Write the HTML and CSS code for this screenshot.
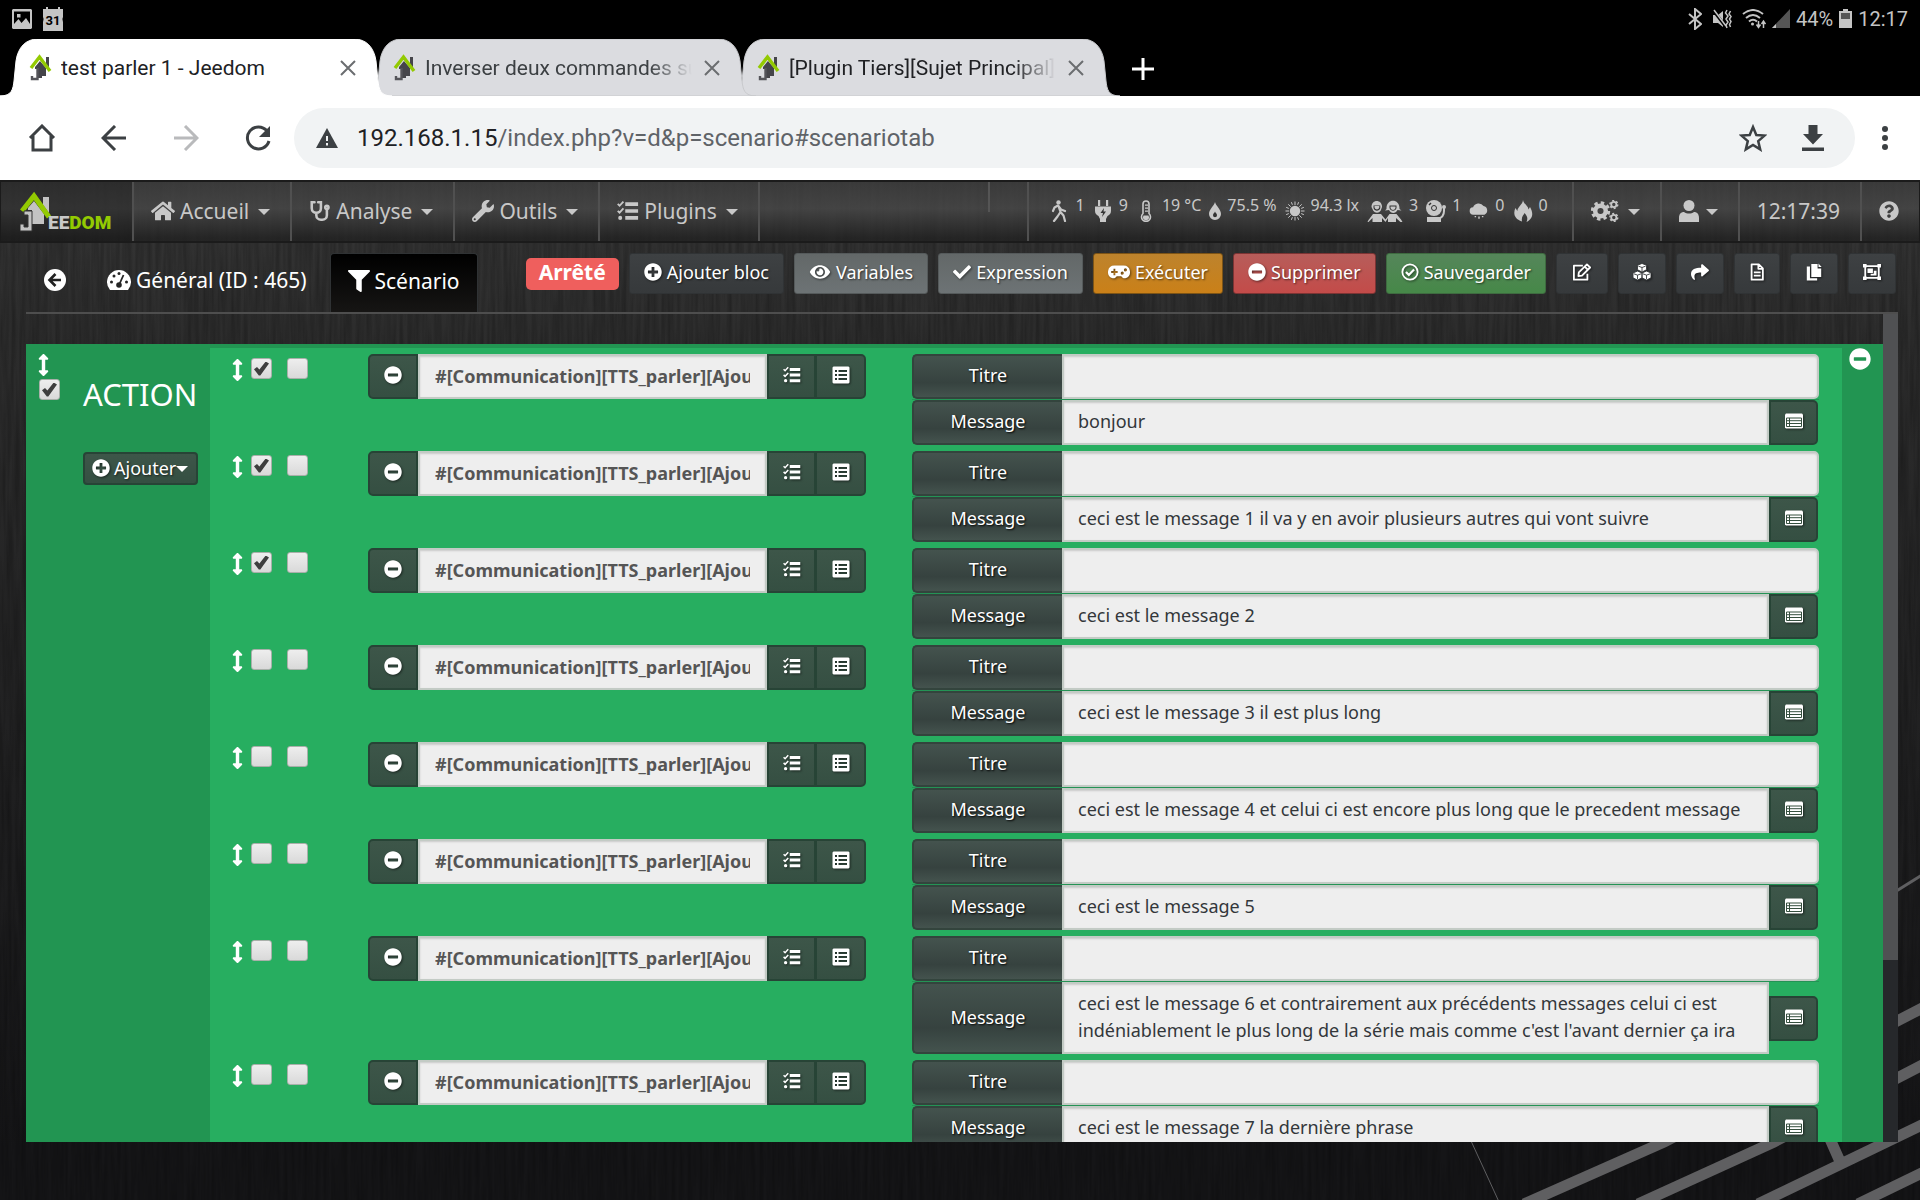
FILE: index.html
```html
<!DOCTYPE html>
<html lang="fr">
<head>
<meta charset="utf-8">
<title>test parler 1 - Jeedom</title>
<link rel="stylesheet" href="styles.css">
</head>
<body>
<svg class="defs" aria-hidden="true">
  <symbol id="home" viewBox="0 0 576 512"><path d="M280.37 148.26L96 300.11V464a16 16 0 0 0 16 16l112.06-.29a16 16 0 0 0 15.92-16V368a16 16 0 0 1 16-16h64a16 16 0 0 1 16 16v95.64a16 16 0 0 0 16 16.05L464 480a16 16 0 0 0 16-16V300L295.67 148.26a12.19 12.19 0 0 0-15.3 0zM571.6 251.47L488 182.56V44.05a12 12 0 0 0-12-12h-56a12 12 0 0 0-12 12v72.61L318.47 43a48 48 0 0 0-61 0L4.34 251.47a12 12 0 0 0-1.6 16.9l25.5 31A12 12 0 0 0 45.15 301l235.22-193.74a12.19 12.19 0 0 1 15.3 0L530.9 301a12 12 0 0 0 16.9-1.6l25.5-31a12 12 0 0 0-1.7-16.93z"/></symbol>
  <symbol id="stethoscope" viewBox="0 0 24 24"><g fill="none" stroke="currentColor" stroke-width="2.800" stroke-linecap="round"><path d="M6 2.500H3V9a5 5 0 0 0 10 0V2.500h-3M8 14v2.500a5 5 0 0 0 5 5h1.500a5 5 0 0 0 5-5V11"/><circle cx="19.500" cy="8" r="1.800"/></g></symbol>
  <symbol id="wrench" viewBox="0 0 512 512"><path d="M507.73 109.1c-2.24-9.03-13.54-12.09-20.12-5.51l-74.36 74.36-67.88-11.31-11.31-67.88 74.36-74.36c6.62-6.62 3.43-17.9-5.66-20.16-47.38-11.74-99.55.91-136.58 37.93-39.64 39.64-50.55 97.1-34.05 147.2L18.74 402.76c-24.99 24.99-24.99 65.51 0 90.5 24.99 24.99 65.51 24.99 90.5 0l213.21-213.21c50.12 16.71 107.47 5.68 147.37-34.22 37.07-37.07 49.7-89.32 37.91-136.73zM64 472c-13.25 0-24-10.75-24-24 0-13.26 10.75-24 24-24s24 10.74 24 24c0 13.25-10.75 24-24 24z"/></symbol>
  <symbol id="tasks" viewBox="0 0 24 24"><path d="M9 2.500h14v4H9zM9 10h14v4H9zM9 17.500h14v4H9z"/><circle cx="3.500" cy="19.500" r="2.200"/><path d="M.8 4.300l2 2L7 1.700M.8 11.800l2 2L7 9.200" fill="none" stroke="currentColor" stroke-width="2"/></symbol>
  <symbol id="walk" viewBox="0 0 18 22"><circle cx="7.500" cy="2.400" r="2.200"/><path d="M2 11L3.500 7.500l3.500-2 3 4 4 1.500M7.500 6l2 6-3 4.500L3 21M9.500 12l3 3.500L14 21" fill="none" stroke="currentColor" stroke-width="2.200" stroke-linecap="round" stroke-linejoin="round"/></symbol>
  <symbol id="plug" viewBox="0 0 18 22"><path d="M4 0h2.200v6H4zM12 0h2.200v6H12zM1 6.500h16V11c0 3-2 4-3.500 5L12 19v3H6v-3l-1.500-3C3 15 1 14 1 11z"/><path d="M10 8l-3.500 5H9l-1 4 4-5.500H9.500z" fill="#333"/></symbol>
  <symbol id="thermo" viewBox="0 0 18 22"><path d="M6 13.500V4a3 3 0 0 1 6 0v9.500a4.500 4.500 0 1 1-6 0z" fill="none" stroke="currentColor" stroke-width="1.600"/><path d="M6.500 15.500h5a3 3 0 1 1-5 0zM8 4.500h3v1.200H8zM8 7.500h3v1.200H8zM8 10.500h3v1.200H8z"/></symbol>
  <symbol id="drop" viewBox="0 0 12 18"><path d="M6 0c1 4 6 7.500 6 12a6 6 0 0 1-12 0C0 7.500 5 4 6 0z"/><path d="M6 9.500c.4 1.500 2 2 2 3.700a2 2 0 0 1-4 0C4 11.500 5.600 11 6 9.500z" fill="#333"/></symbol>
  <symbol id="sun" viewBox="0 0 20 20"><circle cx="10" cy="10" r="5.200"/><path d="M10 .5V4M10 16v3.500M.5 10H4M16 10h3.500M3.300 3.300l2.400 2.400M14.300 14.300l2.400 2.400M3.300 16.700l2.400-2.400M14.300 5.700l2.400-2.400M6.400 1.200l1 2.600M12.600 16.200l1 2.600M1.200 13.600l2.600-1M16.200 7.400l2.600-1M1.200 6.400l2.600 1M16.200 12.600l2.600 1M6.400 18.800l1-2.600M12.600 3.800l1-2.600" stroke="currentColor" stroke-width="1"/></symbol>
  <symbol id="people" viewBox="0 0 36 22"><path d="M4.500 7C4.500-1 15-1 15 7l-1.300 3.500c-2 3-5.400 3-7.500 0z"/><path d="M6.500 5.500h6.800V8c-1 3.500-5.800 3.500-6.800 0z" fill="#333"/><path d="M7.500 6h4.800v1.500c-.8 2.500-4 2.500-4.800 0z"/><path d="M.5 22l1-2 4.500-6h8l4.500 5.500 4-5.500h7l4.500 5.500 1.500 2.500-1.500.5-5-4.500v4H21v-4l-2.500 4-3.500-4v4H5.500v-4l-4 4z"/><path d="M19.500 9C19-2 33-2 32.500 9l2 1.500-4-.5c-2 4-6.500 4-8.500 0l-4 .5z"/><path d="M22.500 5.500h7V8c-1 3.500-6 3.500-7 0z" fill="#333"/><path d="M23.500 6.500h5V8c-.8 2.500-4.200 2.500-5 0z"/></symbol>
  <symbol id="bell" viewBox="0 0 20 22"><circle cx="8" cy="8" r="8"/><circle cx="8" cy="8" r="2.500" fill="none" stroke="#333"/><path d="M3 5l2-2" stroke="#333" stroke-width="1.500"/><path d="M1 17h14v5H1z"/><path d="M18 8v3c0 5-3 7-6 8" fill="none" stroke="currentColor" stroke-width="2"/><circle cx="18" cy="7" r="2"/></symbol>
  <symbol id="rain" viewBox="0 0 22 18"><path d="M5 13a4 4 0 0 1-.5-8A6.500 6.500 0 0 1 16 3.500 5 5 0 0 1 17 13z"/><path d="M7 14.500v1.500M11 15v2.500M15 14.500v1.500" stroke="currentColor" stroke-width="1.600"/></symbol>
  <symbol id="fire" viewBox="0 0 20 22"><path d="M10 0c.5 4 5 5.500 5.500 9.500L17 7c3 5 4 11-3.500 15 1.500-3 1-6-2-9-.5 2-3.500 3.500-2.500 8.500C1 19 0 13 2.500 8l1.800 3C5 6 9.500 5 10 0z"/></symbol>
  <symbol id="cogs" viewBox="0 0 28 22"><circle cx="9.500" cy="11" r="5.300" fill="none" stroke="currentColor" stroke-width="4.500"/><circle cx="9.500" cy="11" r="8" fill="none" stroke="currentColor" stroke-width="3.400" stroke-dasharray="3.300 2.980"/><g fill="none" stroke="currentColor"><circle cx="22.800" cy="4.500" r="2.600" stroke-width="1.800"/><circle cx="22.800" cy="4.500" r="3.900" stroke-width="1.500" stroke-dasharray="2 2.080"/><circle cx="22.800" cy="17.500" r="2.600" stroke-width="1.800"/><circle cx="22.800" cy="17.500" r="3.900" stroke-width="1.500" stroke-dasharray="2 2.080"/></g></symbol>
  <symbol id="user" viewBox="0 0 20 22"><circle cx="10" cy="5.500" r="5.500"/><path d="M0 22v-4c0-4 2-6 5-6 3 2 7 2 10 0 3 0 5 2 5 6v4z"/></symbol>
  <symbol id="question" viewBox="0 0 512 512"><path d="M504 256c0 136.997-111.043 248-248 248S8 392.997 8 256C8 119.083 119.043 8 256 8s248 111.083 248 248zM262.655 90c-54.497 0-89.255 22.957-116.549 63.758-3.536 5.286-2.353 12.415 2.715 16.258l34.699 26.31c5.205 3.947 12.621 3.008 16.665-2.122 17.864-22.658 30.113-35.797 57.303-35.797 20.429 0 45.698 13.148 45.698 32.958 0 14.976-12.363 22.667-32.534 33.976C247.128 238.528 216 254.941 216 296v4c0 6.627 5.373 12 12 12h56c6.627 0 12-5.373 12-12v-1.333c0-28.462 83.186-29.647 83.186-106.667 0-58.002-60.165-102-116.531-102zM256 338c-25.365 0-46 20.635-46 46 0 25.364 20.635 46 46 46s46-20.636 46-46c0-25.365-20.635-46-46-46z"/></symbol>
  <symbol id="back" viewBox="0 0 22 22"><circle cx="11" cy="11" r="11"/><path d="M11.500 5L5.500 11l6 6M6 11h11" fill="none" stroke="#222" stroke-width="2.600"/></symbol>
  <symbol id="gauge" viewBox="0 0 24 22"><path d="M3 21A12 12 0 1 1 21 21z"/><g fill="#242424"><circle cx="4.500" cy="13" r="1.500"/><circle cx="7" cy="7" r="1.500"/><circle cx="12" cy="4.500" r="1.500"/><circle cx="19.500" cy="13" r="1.500"/><circle cx="12" cy="16" r="2.800"/></g><path d="M12 16l4.500-10" stroke="#242424" stroke-width="1.800"/></symbol>
  <symbol id="filter" viewBox="0 0 512 512"><path d="M487.976 0H24.028C2.71 0-8.047 25.866 7.058 40.971L192 225.941V432c0 7.831 3.821 15.17 10.237 19.662l80 55.98C298.02 518.69 320 507.493 320 487.98V225.941l184.947-184.97C520.021 25.896 509.338 0 487.976 0z"/></symbol>
  <symbol id="plus" viewBox="0 0 512 512"><path d="M256 8C119 8 8 119 8 256s111 248 248 248 248-111 248-248S393 8 256 8zm144 276c0 6.6-5.4 12-12 12h-92v92c0 6.6-5.4 12-12 12h-56c-6.600 0-12-5.400-12-12v-92h-92c-6.600 0-12-5.400-12-12v-56c0-6.600 5.400-12 12-12h92v-92c0-6.600 5.400-12 12-12h56c6.600 0 12 5.400 12 12v92h92c6.600 0 12 5.400 12 12v56z"/></symbol>
  <symbol id="minus" viewBox="0 0 512 512"><path d="M256 8C119 8 8 119 8 256s111 248 248 248 248-111 248-248S393 8 256 8zM124 296c-6.600 0-12-5.400-12-12v-56c0-6.600 5.400-12 12-12h264c6.600 0 12 5.400 12 12v56c0 6.600-5.400 12-12 12H124z"/></symbol>
  <symbol id="eye" viewBox="0 0 576 512"><path d="M572.52 241.4C518.29 135.59 410.93 64 288 64S57.68 135.64 3.480 241.41a32.35 32.35 0 0 0 0 29.19C57.71 376.41 165.07 448 288 448s230.32-71.64 284.52-177.41a32.35 32.35 0 0 0 0-29.19zM288 400a144 144 0 1 1 144-144 143.93 143.93 0 0 1-144 144zm0-240a95.31 95.31 0 0 0-25.31 3.790 47.85 47.85 0 0 1-66.9 66.9A95.78 95.78 0 1 0 288 160z"/></symbol>
  <symbol id="check" viewBox="0 0 512 512"><path d="M173.898 439.404l-166.4-166.4c-9.997-9.997-9.997-26.206 0-36.204l36.203-36.204c9.997-9.998 26.207-9.998 36.204 0L192 312.69 432.095 72.596c9.997-9.997 26.207-9.997 36.204 0l36.203 36.204c9.997 9.997 9.997 26.206 0 36.204l-294.4 294.401c-9.998 9.997-26.207 9.997-36.204-.001z"/></symbol>
  <symbol id="pad" viewBox="0 0 24 16"><path fill-rule="evenodd" d="M7 1h10a7 7 0 0 1 2 13.700c-2 .5-3.500-.7-4.500-2.200h-5C8.500 14 7 15.200 5 14.700A7 7 0 0 1 7 1zM6 4.500V7H3.500v2H6v2.500h2V9h2.500V7H8V4.500zM15.500 7.500a1.700 1.700 0 1 0 .1 3.400 1.700 1.700 0 0 0-.1-3.400zM19 4a1.700 1.700 0 1 0 .1 3.400A1.700 1.700 0 0 0 19 4z"/></symbol>
  <symbol id="okcircle" viewBox="0 0 20 20"><g fill="none" stroke="currentColor" stroke-width="2"><circle cx="10" cy="10" r="8.500"/><path d="M5.500 10l3.200 3.200 5.800-6" stroke-width="2.400"/></g></symbol>
  <symbol id="edit" viewBox="0 0 22 20"><g fill="none" stroke="currentColor" stroke-width="2" stroke-linejoin="round"><path d="M12 3H2v15.500h15V12"/><path d="M7.500 10.500L16.500 1.500 20 5l-9 9-4 .5z M14 4l3.500 3.500"/></g></symbol>
  <symbol id="cubes" viewBox="0 0 20 20"><g stroke="#36393a"><path d="M10 .5l5 2v5l-5 2.500-5-2.500v-5zM5 9l5 2v5.500L5 19l-5-2.500V11zM15 9l5 2v5.500L15 19l-5-2.500V11z"/><path d="M6 3.500l4 1.500 4-1.500M10 5v4M1 12l4 1.500L9 12M5 13.500V18M11 12l4 1.500 4-1.500M15 13.500V18" fill="none"/></g></symbol>
  <symbol id="share" viewBox="0 0 512 512"><path d="M503.691 189.836L327.687 37.851C312.281 24.546 288 35.347 288 56.015v80.053C127.371 137.907 0 170.1 0 322.326c0 61.441 39.581 122.309 83.333 154.132 13.653 9.931 33.111-2.533 28.077-18.631C66.066 312.814 132.917 274.316 288 272.085V360c0 20.700 24.300 31.453 39.687 18.164l176.004-152c11.071-9.562 11.086-26.753 0-36.328z"/></symbol>
  <symbol id="file" viewBox="0 0 16 20"><path d="M2 1.500h8L14.500 6v12.500H2zM9.500 1.500v5h5M4.500 10.500h7.500M4.500 14h7.500" fill="none" stroke="currentColor" stroke-width="2" stroke-linejoin="round"/></symbol>
  <symbol id="copy" viewBox="0 0 18 20"><path d="M6 1h7v5h4v9.500H6zM14 .5L17.500 4.500H14zM4.500 4v13h8v2.500H1V4z"/></symbol>
  <symbol id="group" viewBox="0 0 20 18"><path d="M2.500 2.500h15v13h-15z" fill="none" stroke="currentColor" stroke-width="2"/><path d="M0 0h4v4H0zM16 0h4v4h-4zM0 14h4v4H0zM16 14h4v4h-4zM5 5h6v5H5zM12 7.500h3V13H8.500v-2H12z"/></symbol>
  <symbol id="updown" viewBox="0 0 256 512"><path d="M214.059 377.941H168V134.059h46.059c21.382 0 32.09-25.851 16.971-40.971L144.971 7.029c-9.373-9.373-24.568-9.373-33.941 0L24.971 93.088c-15.119 15.119-4.411 40.971 16.971 40.971H88v243.882H41.941c-21.382 0-32.09 25.851-16.971 40.971l86.059 86.059c9.373 9.373 24.568 9.373 33.941 0l86.059-86.059c15.12-15.119 4.412-40.971-16.970-40.971z"/></symbol>
  <symbol id="list" viewBox="0 0 18 18"><path fill-rule="evenodd" d="M1.500.5h15l1 1v15l-1 1h-15l-1-1v-15zM3 4v2h2V4zM6.500 4v2H15V4zM3 8v2h2V8zM6.500 8v2H15V8zM3 12v2h2v-2zM6.500 12v2H15v-2z"/></symbol>
  <symbol id="card" viewBox="0 0 18 15"><path d="M1 0h16l1 1v13l-1 1H1l-1-1V1z"/><path d="M1.500 4.500h15v8.500h-15zM1.500 7.200h15M1.500 10h15M4.500 4.500v8.500" fill="none" stroke="#36503f"/></symbol>
  <symbol id="favicon" viewBox="0 0 24 28"><path d="M6 13l5-6 6 7v8h-4v2H9v-9H6zM17 3h3v11l-3-4z" fill="#45454a"/><path d="M2 14L10.500 3 21 17" fill="none" stroke="#93ca02" stroke-width="3.400"/><path d="M8.500 14v11H3v-3" fill="none" stroke="#55555a" stroke-width="2.400"/></symbol>
  <symbol id="close" viewBox="0 0 16 16"><path d="M1 1l14 14M15 1L1 15" stroke="currentColor" stroke-width="2"/></symbol>
  <symbol id="tabshape" viewBox="0 0 392 57" preserveAspectRatio="none"><path d="M0 57C12 57 13 50 14 42L16 22C18 8 26 0 38 0H354C366 0 374 8 376 22L378 42C379 50 380 57 392 57Z"/></symbol>
</svg>

<div class="statusbar">
  <svg width="20" height="20" viewBox="0 0 20 20"><path fill-rule="evenodd" d="M1 0h18l1 1v18l-1 1H1l-1-1V1zM2 2.500V15l4.500-5 3 4L14 9l4 6V2.500zM5 5h3.500v3.500H5z"/></svg>
  <svg class="calendar" width="22" height="24" viewBox="0 0 22 24"><path d="M1 2h3V0h2v2h10V0h2v2h3v8l-.6 2 .6 3v9H1v-9l.6-3L1 10z"/><text x="11" y="18" text-anchor="middle" class="cal">31</text></svg>
  <span class="spacer"></span>
  <svg width="14" height="22" viewBox="0 0 14 22"><path d="M1 6l12 10-6 5V1l6 5L1 16" fill="none" stroke="currentColor" stroke-width="2"/></svg>
  <svg class="mute" width="20" height="20" viewBox="0 0 20 20"><path d="M1 6h5l5-4v16l-5-4H1z"/><path d="M1 1l13 17" stroke="#000" stroke-width="3"/><path d="M2 1l12 16M15 1l-1.500 3L16 7l-2 3 2 3-2 3 1 3M18.500 2L17 5l2 2.500-1.500 2.500 1.500 2.500-1.500 3 1 2.500" fill="none" stroke="currentColor" stroke-width="1.500"/></svg>
  <svg width="24" height="20" viewBox="0 0 24 20"><g fill="none" stroke="currentColor" stroke-width="2"><path d="M1 5Q11-3 21 5M4 9q7-6 14 0M7 12.500q4-3.500 8 0"/><path d="M16.500 12v6M21.500 19v-6M14.500 15.500l2 3 2-3M19.500 15l2-3 2 3" stroke-width="1.500"/></g><circle cx="10.500" cy="15" r="1.500"/></svg>
  <svg width="18" height="20" viewBox="0 0 18 20"><path d="M18 0v19H0z" fill="#555"/><path d="M4 15v4H0z"/></svg>
  <span>44%</span>
  <svg width="13" height="19" viewBox="0 0 13 19"><path d="M4 0h5v2h4v17H0V2h4z"/><path d="M2 4h9v6H2z" fill="#555"/></svg>
  <span>12:17</span>
</div>

<div class="tabs">
  <div class="tab tab-active"><svg class="tab-bg"><use href="#tabshape"/></svg><svg class="fav"><use href="#favicon"/></svg><span class="tab-title">test parler 1 - Jeedom</span><button class="close" aria-label="Fermer"><svg><use href="#close"/></svg></button></div>
  <div class="tab tab-second"><svg class="tab-bg"><use href="#tabshape"/></svg><svg class="fav"><use href="#favicon"/></svg><span class="tab-title fade">Inverser deux commandes sur</span><button class="close" aria-label="Fermer"><svg><use href="#close"/></svg></button></div>
  <div class="tab"><svg class="tab-bg"><use href="#tabshape"/></svg><svg class="fav"><use href="#favicon"/></svg><span class="tab-title fade">[Plugin Tiers][Sujet Principal]</span><button class="close" aria-label="Fermer"><svg><use href="#close"/></svg></button></div>
  <button class="newtab" aria-label="Nouvel onglet"><svg width="22" height="22" viewBox="0 0 22 22"><path d="M11 0v22M0 11h22" stroke="#fff" stroke-width="3"/></svg></button>
</div>

<div class="toolbar">
  <button class="tool" aria-label="Accueil"><svg width="28" height="28" viewBox="0 0 28 28"><path d="M2 14L14 2l12 12M5 12v14h18V12" fill="none" stroke="currentColor" stroke-width="3"/></svg></button>
  <button class="tool" aria-label="Retour"><svg width="26" height="26" viewBox="0 0 26 26"><path d="M14 1L2 13l12 12M2 13h23" fill="none" stroke="currentColor" stroke-width="3"/></svg></button>
  <button class="tool tool-off" aria-label="Suivant"><svg width="26" height="26" viewBox="0 0 26 26"><path d="M12 1l12 12-12 12M24 13H1" fill="none" stroke="currentColor" stroke-width="3"/></svg></button>
  <button class="tool" aria-label="Actualiser"><svg width="26" height="26" viewBox="0 0 26 26"><path d="M22 6A11 11 0 1 0 24 16" fill="none" stroke="currentColor" stroke-width="3"/><path d="M25 1v11H14z"/></svg></button>
  <div class="omnibox">
    <svg width="22" height="20" viewBox="0 0 22 20"><path d="M11 0l11 20H0z"/><path d="M11 8v5M11 15v2.500" stroke="#f1f3f4" stroke-width="2"/></svg>
    <span class="url"><b>192.168.1.15</b>/index.php?v=d&amp;p=scenario#scenariotab</span>
    <button class="star" aria-label="Favori"><svg width="28" height="28" viewBox="0 0 28 28"><path d="M14 3l3.300 8 8.200.6-6.300 5.500 2 8.300-7.200-4.500-7.200 4.500 2-8.300L2.500 11.600l8.200-.6z" fill="none" stroke="currentColor" stroke-width="2.500"/></svg></button>
    <button class="star" aria-label="Télécharger"><svg width="22" height="26" viewBox="0 0 22 26"><path d="M6.500 0h9v9H21L11 19.500 1 9h5.500zM0 22.500h22V26H0z"/></svg></button>
  </div>
  <button class="tool" aria-label="Menu"><svg width="6" height="24" viewBox="0 0 6 24"><circle cx="3" cy="3" r="3"/><circle cx="3" cy="12" r="3"/><circle cx="3" cy="21" r="3"/></svg></button>
</div>

<div class="app">
  <svg class="wood" aria-hidden="true">
    <filter id="grain" x="0" y="0" width="100%" height="100%"><feTurbulence type="fractalNoise" baseFrequency="0.250 0.012" numOctaves="3" seed="4"/><feColorMatrix values="0 0 0 0 0  0 0 0 0 0  0 0 0 0 0  1.200 0 0 0 -0.350"/></filter>
    <rect width="100%" height="100%" filter="url(#grain)" opacity="0.350"/>
    <svg viewBox="0 0 1920 1020" preserveAspectRatio="xMaxYMax slice" width="100%" height="100%"><g stroke="#5f5f61" stroke-width="11" fill="none"><path d="M1524 1024L1664 962 1930 824M1638 1024L1774 962 1930 881M1758 1024L1930 941M1858 1024L1930 989M1826 950L1842 986"/><path d="M1890 715L1930 690" stroke-width="3"/><path d="M1466 950L1500 1024" stroke-width="1"/></g></svg>
  </svg>

  <nav class="navbar">
    <a class="brand" href="#"><svg class="brand-mark" viewBox="0 0 34 42"><path d="M8 17l6-7 10 13v10H12V19H8zM23 6h6v16l-6-8z" fill="#c3c3c3"/><path d="M2 20L14 5l15 21" fill="none" stroke="#93ca02" stroke-width="5"/><path d="M4 20h8v20H0v-7h4v3h4V24H4z" fill="#c3c3c3" stroke="#333"/></svg><span class="brand-name">EE<b>DOM</b></span></a>
    <a class="item" href="#"><svg class="i24"><use href="#home"/></svg>Accueil<i class="caret"></i></a>
    <a class="item" href="#"><svg class="i22"><use href="#stethoscope"/></svg>Analyse<i class="caret"></i></a>
    <a class="item" href="#"><svg class="i22"><use href="#wrench"/></svg>Outils<i class="caret"></i></a>
    <a class="item" href="#"><svg class="i22"><use href="#tasks"/></svg>Plugins<i class="caret"></i></a>
    <div class="item gap-item"><span class="tick"></span></div>
    <div class="item summary">
      <span><svg class="s18"><use href="#walk"/></svg>1</span>
      <span><svg class="s18"><use href="#plug"/></svg>9</span>
      <span><svg class="s18"><use href="#thermo"/></svg>19 °C</span>
      <span><svg class="s12"><use href="#drop"/></svg>75.5 %</span>
      <span><svg class="s18"><use href="#sun"/></svg>94.3 lx</span>
      <span><svg class="s36"><use href="#people"/></svg>3</span>
      <span><svg class="s18"><use href="#bell"/></svg>1</span>
      <span><svg class="s18"><use href="#rain"/></svg>0</span>
      <span><svg class="s18"><use href="#fire"/></svg>0</span>
    </div>
    <a class="item" href="#" aria-label="Réglages"><svg class="i28"><use href="#cogs"/></svg><i class="caret"></i></a>
    <a class="item" href="#" aria-label="Profil"><svg class="i20"><use href="#user"/></svg><i class="caret tight"></i></a>
    <span class="item">12:17:39</span>
    <a class="item help" href="#" aria-label="Aide"><svg class="i20"><use href="#question"/></svg></a>
  </nav>

  <div class="head">
    <a class="page-tab" href="#" aria-label="Retour"><svg class="i22"><use href="#back"/></svg></a>
    <a class="page-tab" href="#"><svg class="i24"><use href="#gauge"/></svg>Général (ID : 465)</a>
    <a class="page-tab current" href="#"><svg class="i22"><use href="#filter"/></svg>Scénario</a>
    <div class="actions">
      <span class="state">Arrêté</span>
      <button class="btn"><svg><use href="#plus"/></svg>Ajouter bloc</button>
      <button class="btn grey"><svg class="wide"><use href="#eye"/></svg>Variables</button>
      <button class="btn grey"><svg><use href="#check"/></svg>Expression</button>
      <button class="btn orange"><svg class="wide"><use href="#pad"/></svg>Exécuter</button>
      <button class="btn red"><svg><use href="#minus"/></svg>Supprimer</button>
      <button class="btn green"><svg><use href="#okcircle"/></svg>Sauvegarder</button>
      <button class="btn" aria-label="Modifier"><svg class="wide"><use href="#edit"/></svg></button>
      <button class="btn" aria-label="Objets"><svg><use href="#cubes"/></svg></button>
      <button class="btn" aria-label="Liens"><svg><use href="#share"/></svg></button>
      <button class="btn" aria-label="Journal"><svg class="slim"><use href="#file"/></svg></button>
      <button class="btn" aria-label="Dupliquer"><svg><use href="#copy"/></svg></button>
      <button class="btn" aria-label="Grouper"><svg><use href="#group"/></svg></button>
    </div>
  </div>

  <div class="scroller">
    <div class="view">
      <section class="block">
        <div class="side">
          <div class="side-handle"><svg class="grip"><use href="#updown"/></svg><input type="checkbox" checked aria-label="Activer le bloc"></div>
          <div class="side-main"><h2>ACTION</h2><button class="btn add"><svg><use href="#plus"/></svg>Ajouter<i class="caret"></i></button></div>
        </div>
        <div class="rows">
          <div class="row">
            <div class="opts"><svg class="grip"><use href="#updown"/></svg><input type="checkbox" checked aria-label="Activer"><input type="checkbox" aria-label="Parallèle"></div>
            <div class="cmd"><button class="btn" aria-label="Retirer"><svg><use href="#minus"/></svg></button><input type="text" aria-label="Commande" value="#[Communication][TTS_parler][Ajouter]#"><button class="btn" aria-label="Action"><svg><use href="#tasks"/></svg></button><button class="btn" aria-label="Choisir"><svg><use href="#list"/></svg></button></div>
            <div class="fields">
              <div class="field"><label for="t1">Titre</label><input type="text" id="t1"></div>
              <div class="field"><label for="m1">Message</label><textarea id="m1" rows="1">bonjour</textarea><button class="btn" aria-label="Choisir"><svg><use href="#card"/></svg></button></div>
            </div>
          </div>
          <div class="row">
            <div class="opts"><svg class="grip"><use href="#updown"/></svg><input type="checkbox" checked aria-label="Activer"><input type="checkbox" aria-label="Parallèle"></div>
            <div class="cmd"><button class="btn" aria-label="Retirer"><svg><use href="#minus"/></svg></button><input type="text" aria-label="Commande" value="#[Communication][TTS_parler][Ajouter]#"><button class="btn" aria-label="Action"><svg><use href="#tasks"/></svg></button><button class="btn" aria-label="Choisir"><svg><use href="#list"/></svg></button></div>
            <div class="fields">
              <div class="field"><label for="t2">Titre</label><input type="text" id="t2"></div>
              <div class="field"><label for="m2">Message</label><textarea id="m2" rows="1">ceci est le message 1 il va y en avoir plusieurs autres qui vont suivre</textarea><button class="btn" aria-label="Choisir"><svg><use href="#card"/></svg></button></div>
            </div>
          </div>
          <div class="row">
            <div class="opts"><svg class="grip"><use href="#updown"/></svg><input type="checkbox" checked aria-label="Activer"><input type="checkbox" aria-label="Parallèle"></div>
            <div class="cmd"><button class="btn" aria-label="Retirer"><svg><use href="#minus"/></svg></button><input type="text" aria-label="Commande" value="#[Communication][TTS_parler][Ajouter]#"><button class="btn" aria-label="Action"><svg><use href="#tasks"/></svg></button><button class="btn" aria-label="Choisir"><svg><use href="#list"/></svg></button></div>
            <div class="fields">
              <div class="field"><label for="t3">Titre</label><input type="text" id="t3"></div>
              <div class="field"><label for="m3">Message</label><textarea id="m3" rows="1">ceci est le message 2</textarea><button class="btn" aria-label="Choisir"><svg><use href="#card"/></svg></button></div>
            </div>
          </div>
          <div class="row">
            <div class="opts"><svg class="grip"><use href="#updown"/></svg><input type="checkbox" aria-label="Activer"><input type="checkbox" aria-label="Parallèle"></div>
            <div class="cmd"><button class="btn" aria-label="Retirer"><svg><use href="#minus"/></svg></button><input type="text" aria-label="Commande" value="#[Communication][TTS_parler][Ajouter]#"><button class="btn" aria-label="Action"><svg><use href="#tasks"/></svg></button><button class="btn" aria-label="Choisir"><svg><use href="#list"/></svg></button></div>
            <div class="fields">
              <div class="field"><label for="t4">Titre</label><input type="text" id="t4"></div>
              <div class="field"><label for="m4">Message</label><textarea id="m4" rows="1">ceci est le message 3 il est plus long</textarea><button class="btn" aria-label="Choisir"><svg><use href="#card"/></svg></button></div>
            </div>
          </div>
          <div class="row">
            <div class="opts"><svg class="grip"><use href="#updown"/></svg><input type="checkbox" aria-label="Activer"><input type="checkbox" aria-label="Parallèle"></div>
            <div class="cmd"><button class="btn" aria-label="Retirer"><svg><use href="#minus"/></svg></button><input type="text" aria-label="Commande" value="#[Communication][TTS_parler][Ajouter]#"><button class="btn" aria-label="Action"><svg><use href="#tasks"/></svg></button><button class="btn" aria-label="Choisir"><svg><use href="#list"/></svg></button></div>
            <div class="fields">
              <div class="field"><label for="t5">Titre</label><input type="text" id="t5"></div>
              <div class="field"><label for="m5">Message</label><textarea id="m5" rows="1">ceci est le message 4 et celui ci est encore plus long que le precedent message</textarea><button class="btn" aria-label="Choisir"><svg><use href="#card"/></svg></button></div>
            </div>
          </div>
          <div class="row">
            <div class="opts"><svg class="grip"><use href="#updown"/></svg><input type="checkbox" aria-label="Activer"><input type="checkbox" aria-label="Parallèle"></div>
            <div class="cmd"><button class="btn" aria-label="Retirer"><svg><use href="#minus"/></svg></button><input type="text" aria-label="Commande" value="#[Communication][TTS_parler][Ajouter]#"><button class="btn" aria-label="Action"><svg><use href="#tasks"/></svg></button><button class="btn" aria-label="Choisir"><svg><use href="#list"/></svg></button></div>
            <div class="fields">
              <div class="field"><label for="t6">Titre</label><input type="text" id="t6"></div>
              <div class="field"><label for="m6">Message</label><textarea id="m6" rows="1">ceci est le message 5</textarea><button class="btn" aria-label="Choisir"><svg><use href="#card"/></svg></button></div>
            </div>
          </div>
          <div class="row">
            <div class="opts"><svg class="grip"><use href="#updown"/></svg><input type="checkbox" aria-label="Activer"><input type="checkbox" aria-label="Parallèle"></div>
            <div class="cmd"><button class="btn" aria-label="Retirer"><svg><use href="#minus"/></svg></button><input type="text" aria-label="Commande" value="#[Communication][TTS_parler][Ajouter]#"><button class="btn" aria-label="Action"><svg><use href="#tasks"/></svg></button><button class="btn" aria-label="Choisir"><svg><use href="#list"/></svg></button></div>
            <div class="fields">
              <div class="field"><label for="t7">Titre</label><input type="text" id="t7"></div>
              <div class="field"><label for="m7">Message</label><textarea id="m7" rows="2">ceci est le message 6 et contrairement aux précédents messages celui ci est
indéniablement le plus long de la série mais comme c'est l'avant dernier ça ira</textarea><button class="btn" aria-label="Choisir"><svg><use href="#card"/></svg></button></div>
            </div>
          </div>
          <div class="row">
            <div class="opts"><svg class="grip"><use href="#updown"/></svg><input type="checkbox" aria-label="Activer"><input type="checkbox" aria-label="Parallèle"></div>
            <div class="cmd"><button class="btn" aria-label="Retirer"><svg><use href="#minus"/></svg></button><input type="text" aria-label="Commande" value="#[Communication][TTS_parler][Ajouter]#"><button class="btn" aria-label="Action"><svg><use href="#tasks"/></svg></button><button class="btn" aria-label="Choisir"><svg><use href="#list"/></svg></button></div>
            <div class="fields">
              <div class="field"><label for="t8">Titre</label><input type="text" id="t8"></div>
              <div class="field"><label for="m8">Message</label><textarea id="m8" rows="1">ceci est le message 7 la dernière phrase</textarea><button class="btn" aria-label="Choisir"><svg><use href="#card"/></svg></button></div>
            </div>
          </div>
        </div>
        <div class="end"><button aria-label="Supprimer le bloc"><svg><use href="#minus"/></svg></button></div>
      </section>
    </div>
    <div class="bar"><div class="thumb"></div></div>
  </div>
</div>
</body>
</html>
```
FILE: styles.css
```css
* { box-sizing: border-box; }
body {
  margin: 0;
  height: 100vh;
  display: flex;
  flex-direction: column;
  overflow: hidden;
  background: #000;
  font-family: "Noto Sans", sans-serif;
  font-size: 18px;
}
svg { fill: currentColor; flex: none; display: block; }
button { font: inherit; color: inherit; background: none; border: 0; padding: 0; cursor: pointer; }
a { color: inherit; text-decoration: none; }
.defs { position: absolute; width: 0; height: 0; }
.spacer { flex: 1; }

/* Android status bar */
.statusbar {
  height: 39px;
  flex: none;
  display: flex;
  align-items: center;
  gap: 6px;
  padding: 0 12px 2px;
  color: #c4c4c4;
  font: 20px Roboto, sans-serif;
}
.calendar { margin-left: 4px; }
.mute { margin: 0 4px; }
.cal { font: bold 13px Roboto, sans-serif; fill: #000; }

/* browser tabs */
.tabs { display: flex; height: 57px; flex: none; font: 21px Roboto, sans-serif; }
.tab {
  position: relative;
  width: 392px;
  margin-right: -28px;
  padding: 0 36px 0 29px;
  display: flex;
  align-items: center;
  gap: 8px;
  color: #202124;
}
.tab-bg { position: absolute; inset: 0; width: 100%; height: 100%; fill: #dbdce0; stroke: #c9cacd; }
.tab-second { z-index: 1; color: #3c4043; }
.tab-active { z-index: 2; }
.tab-active .tab-bg { fill: #fff; stroke: #fff; }
.fav { position: relative; width: 24px; height: 28px; }
.tab-title { position: relative; flex: 1; overflow: hidden; white-space: nowrap; margin-right: 4px; }
.fade { mask-image: linear-gradient(90deg, #000 84%, transparent); }
.close { position: relative; color: #6b6d70; }
.close svg { width: 16px; height: 16px; }
.newtab { margin: 3px 0 0 40px; }

/* browser toolbar */
.toolbar {
  height: 84px;
  flex: none;
  display: flex;
  align-items: center;
  padding: 0 0 0 6px;
  background: #fff;
  color: #3c4043;
}
.tool { width: 72px; display: flex; justify-content: center; }
.tool:last-child { width: 65px; padding-right: 5px; }
.tool-off { color: #b9babc; }
.omnibox {
  flex: 1;
  height: 60px;
  border-radius: 30px;
  background: #f1f3f4;
  display: flex;
  align-items: center;
  gap: 19px;
  padding: 0 31px 0 22px;
}
.url { flex: 1; font: 24px Roboto, sans-serif; color: #5f6368; }
.url b { font-weight: normal; color: #202124; }
.star + .star { margin-left: 16px; }

/* application */
.app {
  position: relative;
  flex: 1;
  min-height: 0;
  display: flex;
  flex-direction: column;
  background: linear-gradient(#363636, #2c2c2c 16%, #1f1f20 60%, #151517 95%);
  color: #fff;
}
.wood { position: absolute; inset: 0; width: 100%; height: 100%; }
.navbar {
  position: relative;
  height: 63px;
  flex: none;
  display: flex;
  border: solid #1b1b1b;
  border-width: 2px 1px;
  background: linear-gradient(rgba(60,60,60,.8), rgba(72,72,72,.8) 45%, rgba(34,34,34,.8) 95%);
  color: #c8c8c8;
  font-size: 21px;
}
.brand { width: 131px; padding-left: 19px; display: flex; align-items: center; background: rgba(20,20,20,.35); }
.brand-mark { width: 34px; height: 42px; }
.brand-name { font: 900 19px Roboto, sans-serif; margin: 22px 0 0 -6px; }
.brand-name b { color: #93ca02; font-weight: 900; }
.item { display: flex; align-items: center; gap: 5px; padding: 0 20px 2px 17px; border-left: 2px solid #505050; white-space: nowrap; }
.i28 { width: 28px; height: 22px; }
.i24 { width: 24px; height: 22px; }
.i22 { width: 22px; height: 22px; }
.i20 { width: 20px; height: 22px; }
.caret { border: 6px solid transparent; border-top-color: currentColor; border-bottom: 0; margin: 2px 0 0 4px; }
.caret.tight { margin-left: 2px; }
.gap-item { flex: 1; padding: 0 37px 0 0; justify-content: flex-end; align-items: flex-start; }
.tick { width: 2px; height: 30px; background: #555; }
.summary { font-size: 16px; gap: 8px; padding: 0 24px 0 21px; align-items: flex-start; }
.summary span { display: flex; gap: 6px; padding-top: 16px; line-height: 14px; }
.summary svg { margin-top: 2px; }
.s12 { width: 12px; height: 22px; }
.s18 { width: 20px; height: 22px; }
.s36 { width: 36px; height: 22px; }
.help { padding-right: 20px; }

.head {
  position: relative;
  height: 71px;
  flex: none;
  margin: 0 22px 0 26px;
  display: flex;
  gap: 5px;
  padding-top: 10px;
  border-bottom: 2px solid #4e4e4e;
  font-size: 21px;
}
.page-tab { display: flex; align-items: center; gap: 5px; padding: 0 18px 5px; white-space: nowrap; }
.current { background: linear-gradient(#000, #161514); border: 1px solid #2f3234; border-bottom: 0; border-radius: 4px 4px 0 0; padding: 0 17px 4px; }
.actions { margin: 0 2px 0 auto; display: flex; align-items: flex-start; gap: 10px; font-size: 18px; }
.state { background: #ef5f5d; border-radius: 5px; font-weight: bold; font-size: 21px; line-height: 26px; padding: 1px 13px 5px; margin-top: 5px; }
.btn {
  display: flex;
  align-items: center;
  justify-content: center;
  gap: 5px;
  height: 41px;
  padding: 0 14px 3px;
  color: #fff;
  white-space: nowrap;
  background: linear-gradient(#3e4143, #36393b);
  border: 1px solid #303335;
  border-radius: 3px;
  text-shadow: 1px 1px 2px rgba(0,0,0,.6);
}
.btn svg { width: 18px; height: 18px; filter: drop-shadow(1px 1px 1px rgba(0,0,0,.5)); }
.btn .wide { width: 22px; }
.btn .slim { width: 16px; }
.grey { background: linear-gradient(#636868, #6d7375); border-color: #555a5b; }
.orange { background: linear-gradient(#bd832d, #ca8018); border-color: #7d5416; }
.red { background: linear-gradient(#b75d5a, #c34b49); border-color: #7d3434; }
.green { background: linear-gradient(#55865a, #468848); border-color: #3e6b40; }

.scroller { position: relative; flex: 1; min-height: 0; display: flex; margin: 0 22px 58px 26px; }
.view { flex: 1; overflow: hidden; padding-top: 30px; }
.bar { width: 15px; background: #26282b; }
.thumb { height: 78%; background: #505153; }

/* action block */
.block { display: grid; grid-template-columns: 184px 1fr 41px; background: #229552; padding-top: 4px; }
.side { display: flex; }
.side-handle { width: 57px; padding: 6px 0 0 13px; }
.side-handle .grip { margin: 0 0 3px -2px; }
.grip { width: 13px; height: 22px; }
.side-main h2 { margin: 28px 0 40px; font-weight: normal; font-size: 31px; line-height: 36px; }
.rows { background: #27ae60; padding: 6px 23px 0 0; }
.row { display: grid; grid-template-columns: 158px 544fr 907fr; margin-bottom: 6px; }
.opts { display: flex; align-items: flex-start; padding: 4px 0 0 21px; }
.opts .grip { margin: 1px 7px 0 0; }
.opts input + input { margin-left: 15px; }
input[type="checkbox"] {
  appearance: none;
  width: 21px;
  height: 21px;
  margin: 0;
  border: 1px solid #a9b0aa;
  border-radius: 3px;
  background: linear-gradient(#eee, #d9d9d9);
  display: grid;
  place-items: center;
}
input[type="checkbox"]:checked::before {
  content: "";
  width: 15px;
  height: 14px;
  background: #3e3e3e;
  clip-path: polygon(0 56%, 20% 40%, 36% 58%, 78% 0, 100% 14%, 42% 100%, 32% 100%);
}
.cmd { display: flex; margin-right: 46px; }
.cmd input { flex: 1; min-width: 0; font-weight: bold; color: #555; padding: 0 15px 2px; }
.cmd input, .field input, textarea {
  font-family: inherit;
  font-size: 18px;
  height: 45px;
  border: 2px solid #c3cbc5;
  border-radius: 0;
  background: #eee;
  box-shadow: inset 0 1px 2px rgba(0,0,0,.15);
  outline: 0;
}
.cmd .btn, .field .btn {
  width: 49px;
  height: 45px;
  background: linear-gradient(#3d5649, #354f42);
  border: 2px solid #274436;
  border-radius: 0;
}
.cmd .btn + .btn { border-left-width: 1px; width: 50px; }
.cmd .btn:first-child { width: 50px; border-radius: 5px 0 0 5px; }
.cmd .btn:last-child, .field .btn:last-child { border-radius: 0 5px 5px 0; }
.fields { background: linear-gradient(#249355, #249355) 0 45px / 100% 1px no-repeat; }
.field { display: flex; align-items: center; }
.field + .field { margin-top: 1px; padding-right: 1px; }
.field label {
  width: 150px;
  align-self: stretch;
  display: flex;
  align-items: center;
  justify-content: center;
  padding-bottom: 3px;
  background: linear-gradient(#44534e, #36423f 65%, #44534e);
  border: 2px solid #33443d;
  border-right: 0;
  border-radius: 5px 0 0 5px;
  text-shadow: 1px 1px 2px #000;
}
.field input { flex: 1; min-width: 0; border-radius: 0 5px 5px 0; }
textarea { flex: 1; min-width: 0; height: auto; line-height: 27px; padding: 6px 14px 8px; color: #33373a; resize: none; overflow: hidden; white-space: pre-wrap; }
.add { height: 33px; gap: 4px; padding: 0 8px 2px 7px; background: linear-gradient(#3d5649, #354f42); border: 2px solid #274436; border-radius: 4px; }
.add .caret { margin-left: -4px; }
.end button { margin-left: 7px; }
.end svg { width: 22px; height: 22px; }
```
